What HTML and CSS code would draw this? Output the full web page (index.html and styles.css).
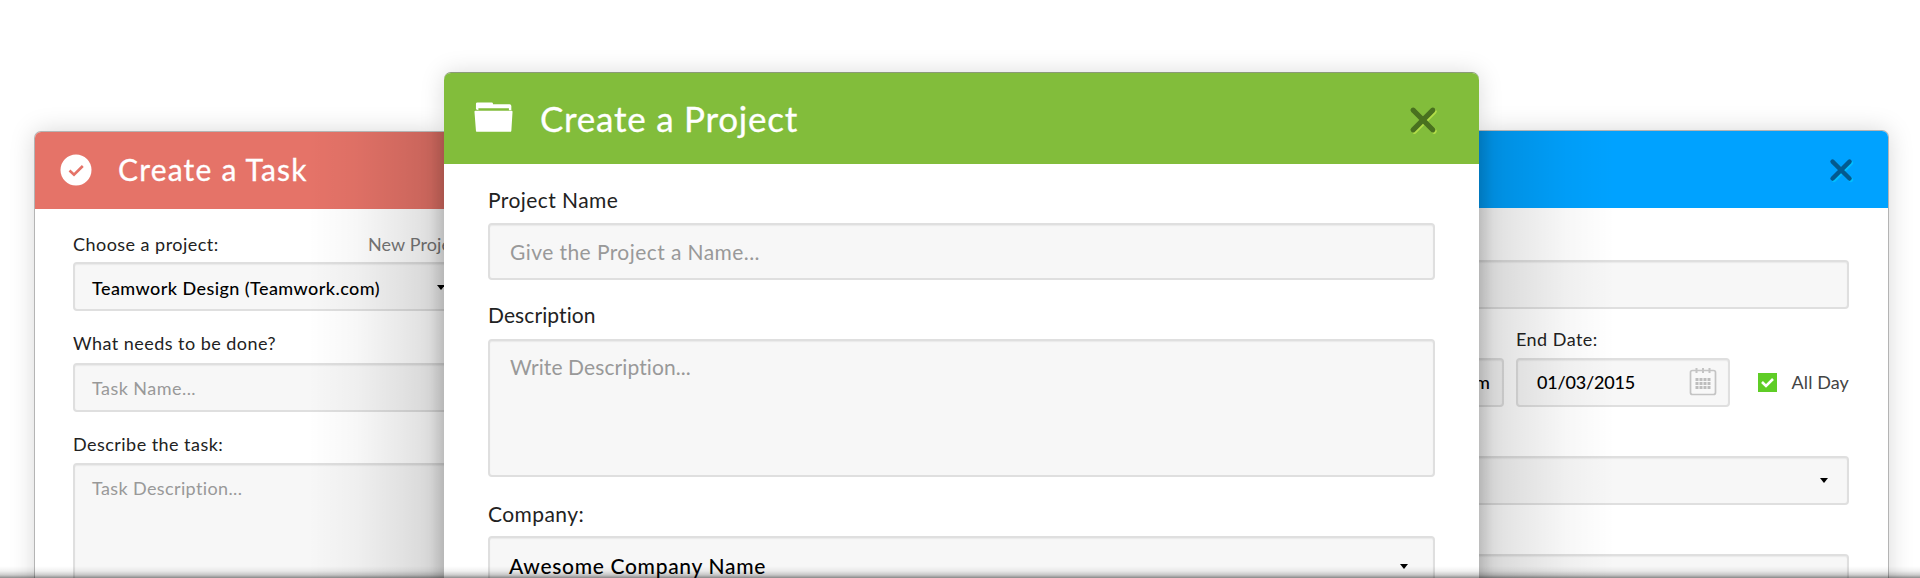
FILE: index.html
```html
<!DOCTYPE html>
<html lang="en">
<head>
<meta charset="utf-8">
<title>Create a Project</title>
<link rel="stylesheet" href="styles.css">
</head>
<body>
<main class="stage">
  <section class="panel side task">
    <header class="bar">
      <svg class="check" viewBox="0 0 32 32"><circle cx="16" cy="16" r="15.500" fill="#fff"/><path d="M9.500 16.500l4.500 4.200 8.800-8.700" fill="none" stroke="#e57368" stroke-width="2.600"/></svg>
      <h2>Create a Task</h2>
    </header>
    <div class="body">
      <div class="label first"><span>Choose a project:</span><span class="new">New Project</span></div>
      <div class="box select"><span>Teamwork Design (Teamwork.com)</span><i class="caret"></i></div>
      <div class="label second">What needs to be done?</div>
      <div class="box hint">Task Name...</div>
      <div class="label third">Describe the task:</div>
      <div class="box hint area">Task Description...</div>
    </div>
  </section>

  <section class="panel project">
    <header class="bar">
      <svg class="folder" viewBox="0 0 40 32"><path d="M2 8V2.500Q2 1 3.500 1H18q1.500 0 1.500 1.500V3H36.500q1.800 0 1.800 1.800V9h-2.500V7H4.500v2z" fill="#fff"/><path d="M1.500 9.700h37q1.200 0 1 1.200L38.300 30q-.1 1.200-1.200 1.200H3.200Q2.100 31.200 2 30L.5 10.900q-.2-1.200 1-1.200z" fill="#fff"/></svg>
      <h1>Create a Project</h1>
      <svg class="close" viewBox="0 0 28 28"><path d="M4 4l19 19M23 4L4 23" stroke="#b2de48" transform="translate(1.300 1.300)"/><path d="M4 4l19 19M23 4L4 23" stroke="#49711f"/></svg>
    </header>
    <div class="body">
      <div class="label first">Project Name</div>
      <div class="box hint">Give the Project a Name...</div>
      <div class="label second tight">Description</div>
      <div class="box hint area tight">Write Description...</div>
      <div class="label third">Company:</div>
      <div class="box select"><span>Awesome Company Name</span><i class="caret"></i></div>
    </div>
  </section>

  <section class="panel side event">
    <header class="bar">
      <svg class="close" viewBox="0 0 28 28"><path d="M4 4l19 19M23 4L4 23" stroke="#00bfff" transform="translate(1.500 1.500)"/><path d="M4 4l19 19M23 4L4 23" stroke="#035a8f"/></svg>
    </header>
    <div class="body">
      <div class="box"></div>
      <div class="label">End Date:</div>
      <div class="dates">
        <div class="box time">m</div>
        <div class="box date"><span>01/03/2015</span>
          <svg class="cal" viewBox="0 0 28 29"><rect x="1.500" y="3.500" width="25" height="24" rx="2" fill="#f8f8f8" stroke="#c4c4c4" stroke-width="1.700"/><path d="M7.500 1v5M14 1v5M20.500 1v5" stroke="#c4c4c4" stroke-width="2"/><path d="M6.500 12.500h15M6.500 16.500h15M6.500 20.500h15" stroke="#bdbdbd" stroke-width="3" stroke-dasharray="3 1"/></svg>
        </div>
        <svg class="tick" viewBox="0 0 19 19"><path fill="#5fcd26" d="M0 0h19v19H0z"/><path d="M4 9l4 4 7-7" fill="none" stroke="#fff" stroke-width="2.600"/></svg>
        <span class="allday">All Day</span>
      </div>
      <div class="box select people"><i class="caret"></i></div>
      <div class="box last"></div>
    </div>
  </section>
  <div class="fade"></div>
</main>
</body>
</html>
```
FILE: styles.css
```css
* { box-sizing: border-box; }
body { margin: 0; background: #fff; font-family: Lato, "Open Sans", sans-serif; color: #222; font-variant-ligatures: none; }
.stage { position: relative; display: flex; align-items: flex-start; width: 1920px; height: 578px; padding-left: 35px; overflow: hidden; }
.panel { flex: none; background: #fff; white-space: nowrap; }
.bar { display: flex; align-items: center; color: #fff; }
h1, h2 { margin: 0; font-weight: 400; -webkit-text-stroke: .3px #fff; }
.close { fill: none; stroke-width: 5; stroke-linecap: round; }
.box { display: flex; align-items: center; background: #f7f7f7; border: 2px solid #dfdfdf; border-radius: 4px; box-shadow: inset 0 1px 1px #e9e9e9; }
.hint { color: #999; }
.select { color: #000; font-weight: 500; }
.caret { margin-left: auto; border: 4.500px solid transparent; border-top: 5px solid #000; border-bottom: 0; }
.label { display: flex; }
.area { align-items: flex-start; }

.side { position: relative; height: 600px; font-size: 18px; letter-spacing: .46px; box-shadow: 0 0 0 1px #b4b4b4, 0 0 26px rgba(0, 0, 0, .17); }
.side::after { content: ""; position: absolute; top: 0; width: 136px; height: 100%; }
.side .bar { height: 77px; }
.side .box { height: 49px; }
.side .label { line-height: 24px; }

.task { width: 409px; margin-top: 132px; border-top-left-radius: 6px; }
.task::after { right: 0; background: linear-gradient(to left, rgba(0, 0, 0, .2), rgba(0, 0, 0, .125) 14px, rgba(0, 0, 0, .085) 42px, rgba(0, 0, 0, .03) 88px, transparent); }
.task .bar { background: #e57368; border-top-left-radius: 6px; padding-left: 24.500px; gap: 26.500px; }
.task h2 { padding-bottom: 3px; font-size: 30px; letter-spacing: 1.200px; }
.check { width: 32px; height: 32px; margin-bottom: 1px; }
.task .body { width: 409px; padding: 23px 0 0 38px; overflow: hidden; }
.task .box { width: 420px; padding-left: 17px; }
.task .caret { margin-right: 46px; }
.task .select { padding-top: 2px; letter-spacing: .43px; }
.task .first { height: 30px; }
.task .second { height: 52px; padding-top: 20px; }
.task .third { height: 51px; padding-top: 20px; }
.task .area { height: 180px; padding-top: 12px; letter-spacing: .38px; }
.new { margin-left: auto; width: 76px; color: #777; letter-spacing: .1px; }

.project { position: relative; z-index: 2; width: 1035px; height: 600px; margin-top: 73px; border-radius: 7px 7px 0 0; font-size: 21px; letter-spacing: .43px; box-shadow: 0 -1px 0 #8b9a78, 0 0 24px rgba(0, 0, 0, .15); }
.project .bar { height: 91px; padding: 0 41px 0 30px; border-radius: 7px 7px 0 0; background: #82bd3b; }
.folder { width: 39px; height: 32px; margin: 0 27px 4px 0; }
.project h1 { padding-bottom: 2px; font-size: 35px; letter-spacing: .76px; }
.project .close { width: 29px; height: 29px; margin: 3px 0 0 auto; }
.project .body { padding: 22px 44px 0 44px; line-height: 28px; }
.project .box { height: 57px; padding: 0 25px 0 20px; }
.project .first { height: 37px; }
.project .second { height: 59px; padding-top: 21px; }
.project .third { height: 59px; padding-top: 23px; }
.project .area { height: 138px; padding-top: 12px; }
.project .tight { letter-spacing: .1px; }
.project .select { padding-top: 3px; padding-left: 19px; letter-spacing: .68px; }

.event { width: 409px; margin-top: 131px; border-top-right-radius: 6px; }
.event::after { left: 0; background: linear-gradient(to right, rgba(0, 0, 0, .2), rgba(0, 0, 0, .125) 14px, rgba(0, 0, 0, .085) 42px, rgba(0, 0, 0, .03) 88px, transparent); }
.event .bar { justify-content: flex-end; padding-right: 34.500px; border-top-right-radius: 6px; background: #00a2ff; }
.event .close { width: 25px; height: 25px; margin-top: 2px; }
.event .body { padding: 52px 39px 0 0; }
.event .box { border-left-width: 0; border-radius: 0 4px 4px 0; }
.event .label { height: 49px; padding: 18px 0 0 37px; }
.dates { display: flex; align-items: center; color: #000; }
.event .time { width: 25px; padding-right: 12px; justify-content: flex-end; font-weight: 500; letter-spacing: 0; }
.event .date { width: 214px; margin-left: 12px; padding: 0 11px 0 19px; justify-content: space-between; border-left-width: 2px; border-radius: 4px; font-weight: 500; letter-spacing: -.2px; }
.event .dates .box { padding-bottom: 2px; }
.cal { width: 28px; height: 29px; }
.tick { width: 19px; height: 19px; margin-left: 28px; }
.allday { margin-left: auto; padding-bottom: 2px; color: #444; letter-spacing: .1px; }
.event .people { margin-top: 49px; padding-right: 19px; }
.event .last { margin-top: 49px; }

.fade { position: absolute; z-index: 3; left: 0; right: 0; bottom: 0; height: 12px; background: linear-gradient(to top, rgba(0, 0, 0, .45), rgba(0, 0, 0, .2) 3px, rgba(0, 0, 0, .06) 7px, transparent); }
```
